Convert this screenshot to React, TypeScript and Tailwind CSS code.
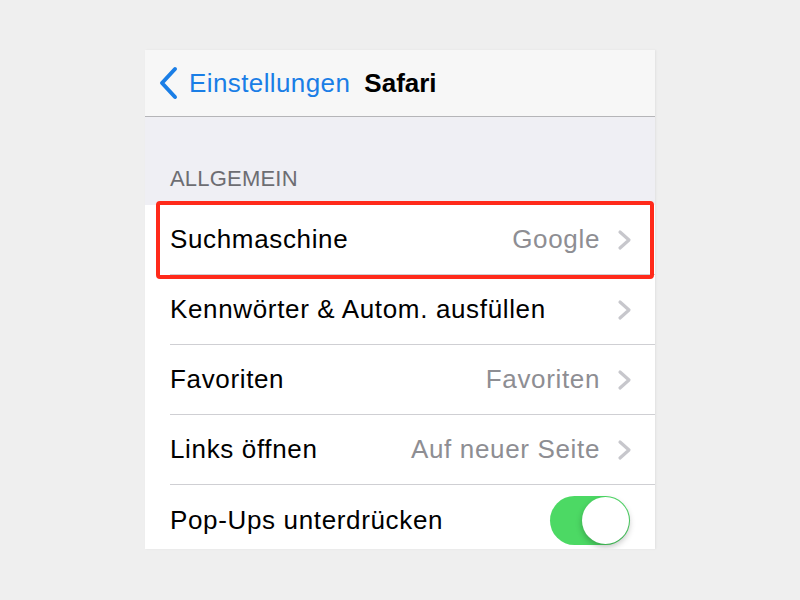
const font = { fontFamily: '"Liberation Sans", Arial, sans-serif' };

type Row = { label: string; value?: string; toggle?: boolean };

const rows: Row[] = [
  { label: "Suchmaschine", value: "Google" },
  { label: "Kennwörter & Autom. ausfüllen", value: "" },
  { label: "Favoriten", value: "Favoriten" },
  { label: "Links öffnen", value: "Auf neuer Seite" },
  { label: "Pop-Ups unterdrücken", toggle: true },
];

function Chevron() {
  return (
    <svg width="16" height="22" viewBox="0 0 16 22">
      <path d="M3 3 L12 11 L3 19" fill="none" stroke="#c7c7cc" strokeWidth="3.2" strokeLinecap="round" strokeLinejoin="round" />
    </svg>
  );
}

export default function App() {
  return (
    <div className="flex h-[600px] w-full justify-center bg-[#efefef] pt-[50px]" style={font}>
      <div className="relative h-[499px] w-[510px] overflow-hidden bg-[#efeff4] shadow-[1px_0_2px_rgba(0,0,0,0.06)]">
        {/* nav bar */}
        <div className="flex h-[67px] items-center border-b border-[#b5b5b8] bg-[#f7f7f7] pl-[12px]">
          <svg width="22" height="34" viewBox="0 0 22 34" className="mr-[10px]">
            <path d="M18 3 L5 17 L18 31" fill="none" stroke="#1a7ee6" strokeWidth="4" strokeLinecap="round" strokeLinejoin="round" />
          </svg>
          <span className="text-[26px] tracking-[0.4px] text-[#1a7ee6]">Einstellungen</span>
          <span className="ml-[14px] text-[26px] font-bold text-black">Safari</span>
        </div>

        {/* section header */}
        <div className="flex h-[88px] items-end pb-[10px] pl-[25px] text-[22px] tracking-[0.2px] text-[#6d6d72]">
          ALLGEMEIN
        </div>

        {/* rows */}
        <div className="bg-white">
          {rows.map((r, i) => (
            <div key={r.label} className="pl-[25px]">
              <div
                className={`flex h-[70px] items-center pr-[22px] ${
                  i < rows.length - 1 ? "border-b border-[#cfcfd3]" : ""
                }`}
              >
                <span className="flex-1 text-[26px] tracking-[0.65px] text-black">{r.label}</span>
                {r.toggle ? (
                  <div className="relative mr-[3px] h-[49px] w-[80px] rounded-full bg-[#4cd964]">
                    <div className="absolute right-[1px] top-[1px] h-[47px] w-[47px] rounded-full bg-white shadow-[0_3px_6px_rgba(0,0,0,0.25)]" />
                  </div>
                ) : (
                  <>
                    {r.value && (
                      <span className="mr-[17px] text-[26px] tracking-[0.65px] text-[#8e8e93]">{r.value}</span>
                    )}
                    <Chevron />
                  </>
                )}
              </div>
            </div>
          ))}
        </div>

        {/* highlight box */}
        <div className="absolute left-[11px] top-[151px] h-[78px] w-[498px] rounded-[4px] border-[4px] border-[#ff2a1a]" />
      </div>
    </div>
  );
}
